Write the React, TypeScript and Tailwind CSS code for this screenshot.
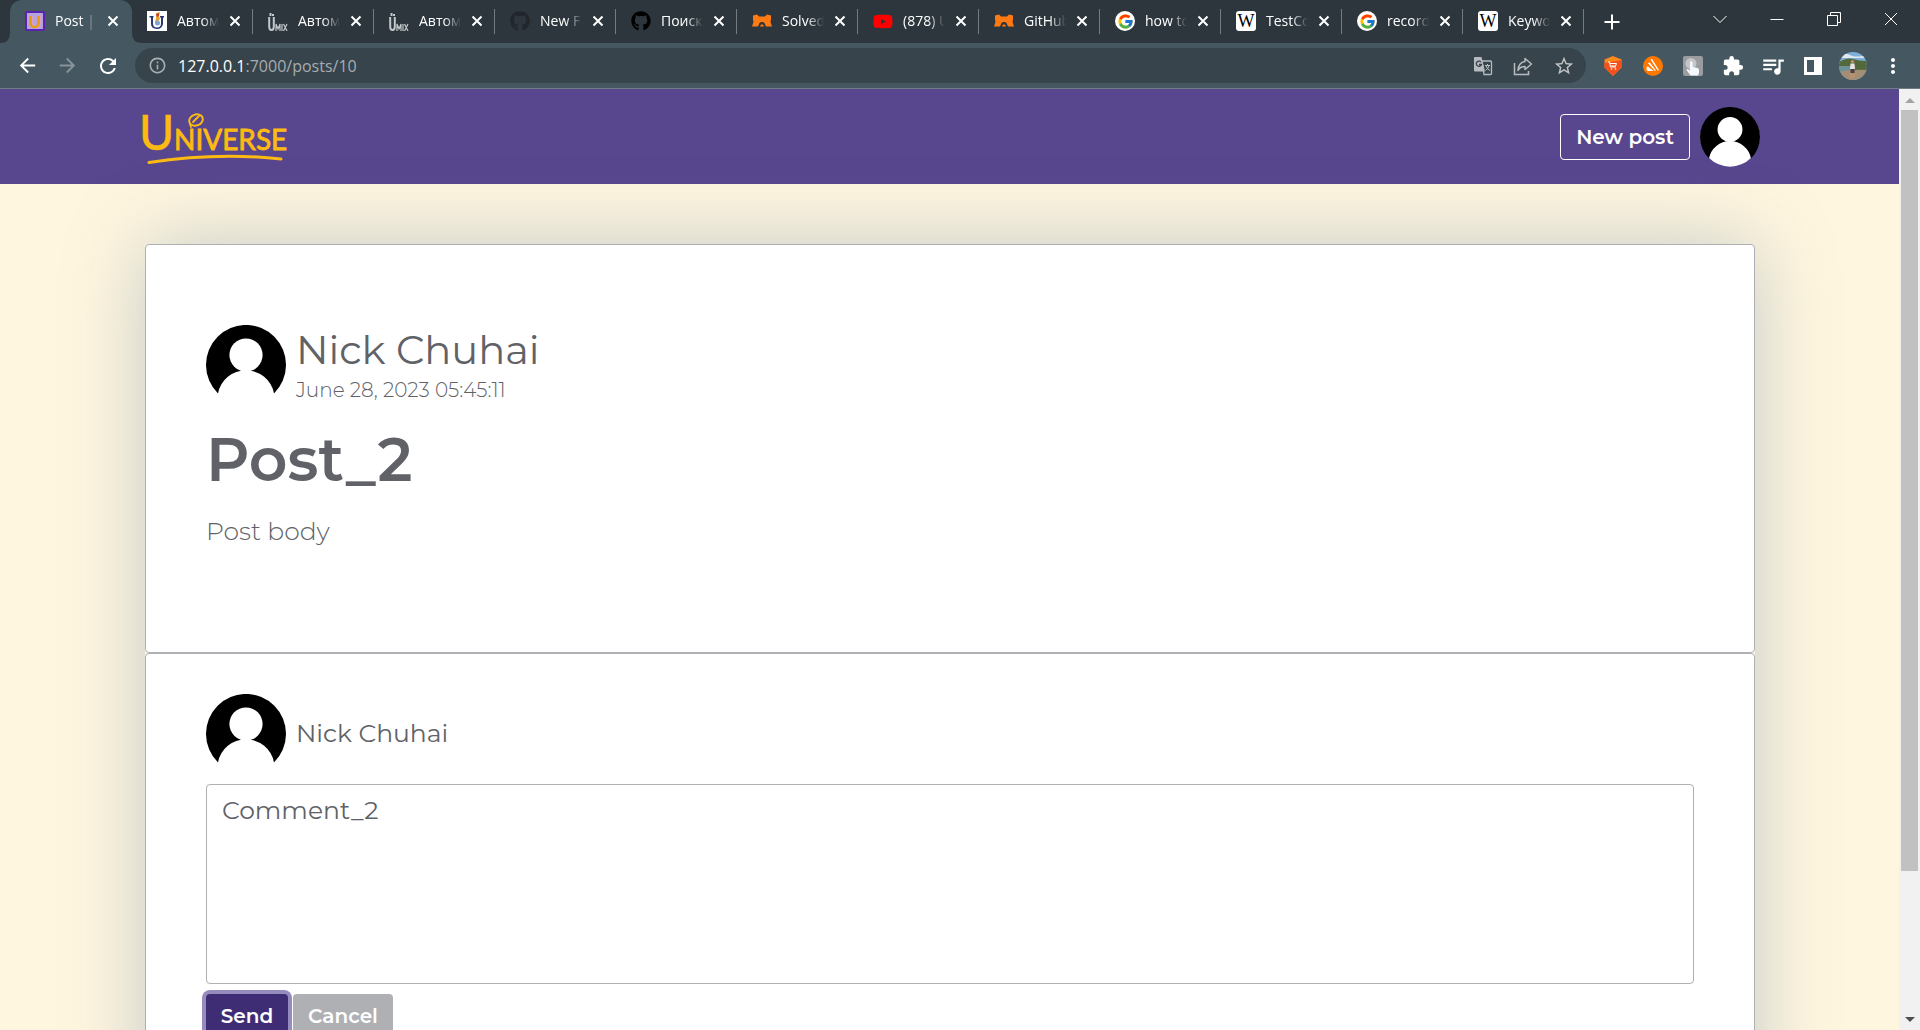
import type { ReactNode } from "react";
import { FaGithub, FaYoutube } from "react-icons/fa";
import { FcGoogle } from "react-icons/fc";
import {
  MdArrowBack,
  MdArrowForward,
  MdExtension,
  MdInfoOutline,
  MdMoreVert,
  MdQueueMusic,
  MdRefresh,
  MdStarBorder,
} from "react-icons/md";

function UniverseIcon() {
  return (
    <span className="flex size-5 items-center justify-center rounded-xs border-2 border-[#5b21b0] bg-[#b9a3dc] font-['Lato',sans-serif] text-[17px] leading-none font-bold text-[#ee9a0c]">
      U
    </span>
  );
}

function UniversityIcon() {
  return (
    <svg viewBox="0 0 20 20" className="size-5">
      <rect width="20" height="20" fill="#fff" />
      <path d="M2.500 5h4v1.500H6v6q0 4 4 4t4-4V6.500h-1V5h4v1.500h-1V13q-1 5-6 5-6-.5-6-5V6.500H2.500z" fill="#26386f" />
      <path d="M9 2l4-1-1 4 1 3-3 4-2-1 1-4z" fill="#e8a33a" />
      <path d="M9 3l3-1v3l-2 1z" fill="#c8442c" />
      <circle cx="10.500" cy="12" r="2.500" fill="#7fa6cf" />
    </svg>
  );
}

function UmixIcon() {
  return (
    <span className="flex size-5 items-end text-[#c3c8cb]">
      <svg viewBox="0 0 7 18" className="h-[18px] w-[7px] shrink-0" fill="none" stroke="currentColor" strokeWidth="2">
        <path d="M1.200 4v9.500q0 3.500 2.300 3.500t2.300-3.500V4M2.500 0v3M5 1v2" />
      </svg>
      <svg viewBox="0 0 13 8" className="h-2 w-[13px] shrink-0" fill="none" stroke="currentColor" strokeWidth="1.200">
        <path d="M1 8V1l2 5 2-5v7M7 1v7M8.500 1L12 8M12 1L8.500 8" />
      </svg>
    </span>
  );
}

function FoxIcon() {
  return (
    <svg viewBox="0 0 20 20" className="size-5" fill="#ff7a12">
      <path d="M1 4.500l4-1 2 2h6l2-2 4 1v4l-.5 2.500L20 15.500h-6l-1.500-3.500L11 11H9l-1.500 1L6 15.500H0L1.500 11 1 8.500z" />
      <path d="M8 15.500l1-2h2l1 2z" />
    </svg>
  );
}

function WikiIcon() {
  return (
    <span className="flex size-5 items-center justify-center rounded-[3px] bg-white font-['Liberation_Serif',serif] text-[18px] leading-none text-black">
      W
    </span>
  );
}

function GoogleIcon() {
  return (
    <span className="flex size-5 items-center justify-center rounded-full bg-white">
      <FcGoogle size={17} />
    </span>
  );
}

const tabs: { title: string; icon: ReactNode }[] = [
  { title: "Post | U", icon: <UniverseIcon /> },
  { title: "Автом", icon: <UniversityIcon /> },
  { title: "Автом", icon: <UmixIcon /> },
  { title: "Автом", icon: <UmixIcon /> },
  { title: "New F", icon: <FaGithub size={20} color="#20262b" /> },
  { title: "Поиск", icon: <FaGithub size={20} color="#000" /> },
  { title: "Solved", icon: <FoxIcon /> },
  { title: "(878) U", icon: <FaYoutube size={21} color="#f00" /> },
  { title: "GitHub", icon: <FoxIcon /> },
  { title: "how to", icon: <GoogleIcon /> },
  { title: "TestCo", icon: <WikiIcon /> },
  { title: "record", icon: <GoogleIcon /> },
  { title: "Keywo", icon: <WikiIcon /> },
];

function CloseGlyph() {
  return (
    <svg viewBox="0 0 12 12" className="size-3" stroke="currentColor" strokeWidth="2">
      <path d="M1.500 1.500l9 9M10.500 1.500l-9 9" />
    </svg>
  );
}

function TabFoot({ className }: { className: string }) {
  return (
    <svg viewBox="0 0 10 10" className={className} fill="#455760">
      <path d="M10 0v10H0Q10 10 10 0z" />
    </svg>
  );
}

function Tab({ title, icon, active }: { title: string; icon: ReactNode; active: boolean }) {
  return (
    <div
      className={
        active
          ? "relative flex h-full w-[122px] shrink-0 items-center rounded-t-xl bg-[#455760] pb-px pl-[15px]"
          : "relative flex h-full w-[121px] shrink-0 items-center pb-px pl-[15px]"
      }
    >
      {active && <TabFoot className="absolute bottom-0 -left-2.5 size-2.5" />}
      {active && <TabFoot className="absolute -right-2.5 bottom-0 size-2.5 -scale-x-100" />}
      <span className="flex size-5 shrink-0 items-center justify-center">{icon}</span>
      <span className="ml-2.5 w-[42px] overflow-hidden mask-r-from-60% text-[14px] leading-5 whitespace-nowrap text-white">
        {title}
      </span>
      <button type="button" aria-label="Close tab" className="ml-2.5 text-white">
        <CloseGlyph />
      </button>
      {!active && <span className="absolute right-0 h-[25px] w-px bg-[#737b80]" />}
    </div>
  );
}

function TabStrip() {
  return (
    <div className="flex h-[43px] items-center bg-[#2c363c] pl-2.5">
      {tabs.map((tab, i) => (
        <Tab key={i} title={tab.title} icon={tab.icon} active={i === 0} />
      ))}
      <button type="button" aria-label="New tab" className="ml-5 text-white">
        <svg viewBox="0 0 16 16" className="size-4" stroke="currentColor" strokeWidth="2">
          <path d="M8 .500v15M.500 8h15" />
        </svg>
      </button>
      <div className="mr-[22px] mb-1.5 ml-auto flex gap-[43px] text-white">
        <button type="button" aria-label="Search tabs">
          <svg viewBox="0 0 14 14" className="size-3.5" fill="none" stroke="currentColor">
            <path d="M.500 4L7 10.500 13.500 4" />
          </svg>
        </button>
        <button type="button" aria-label="Minimize">
          <svg viewBox="0 0 14 14" className="size-3.5" stroke="currentColor">
            <path d="M.500 7.500h13" />
          </svg>
        </button>
        <button type="button" aria-label="Restore">
          <svg viewBox="0 0 14 14" className="size-3.5" fill="none" stroke="currentColor">
            <path d="M.500 3.500h10v10H.500zM3.500 3V.500h10v10H11" />
          </svg>
        </button>
        <button type="button" aria-label="Close window">
          <svg viewBox="0 0 14 14" className="size-3.5" stroke="currentColor">
            <path d="M1 1l12 12M13 1L1 13" />
          </svg>
        </button>
      </div>
    </div>
  );
}

function TranslateIcon() {
  return (
    <svg viewBox="0 0 20 20" className="size-5">
      <path d="M9 5h8.500a1 1 0 011 1v11.500a1 1 0 01-1 1H11z" fill="none" stroke="#b6bbbf" strokeWidth="1.300" />
      <path d="M12 9.500h5M14.500 8v1.500M16 9.500q-.5 3-3.500 5M13 10q1 3 4 4.500" fill="none" stroke="#b6bbbf" />
      <path d="M2 1h6.500l3.500 14.500H2a1 1 0 01-1-1V2a1 1 0 011-1z" fill="#b6bbbf" />
      <path d="M8 6.200A2.600 2.600 0 108.400 8.500H6" fill="none" stroke="#38444b" strokeWidth="1.300" />
    </svg>
  );
}

function ShareIcon() {
  return (
    <svg viewBox="0 0 20 20" className="size-5" fill="none" stroke="#b6bbbf" strokeWidth="1.500">
      <path d="M1.500 7v11.500h14V15" />
      <path d="M12 2.500l6.500 5.500-6.500 5.500V10.500q-5 0-7 4 .5-8 7-9z" strokeLinejoin="round" />
    </svg>
  );
}

function Toolbar() {
  return (
    <div className="flex h-[46px] items-center border-b border-[#6f7c83] bg-[#455760] pl-4 text-white">
      <button type="button" aria-label="Back" className="flex w-10">
        <MdArrowBack size={23} />
      </button>
      <button type="button" aria-label="Forward" className="flex w-10 text-[#89949a]">
        <MdArrowForward size={23} />
      </button>
      <button type="button" aria-label="Reload" className="flex w-[39px]">
        <MdRefresh size={24} />
      </button>
      <div className="flex h-[35px] min-w-0 flex-1 items-center rounded-full bg-[#38444b] pr-[11px] pl-[13px]">
        <MdInfoOutline size={19} color="#a9b0b4" />
        <span className="ml-[11px] flex-1 text-[16px] leading-6 text-[#a5adb2]">
          <span className="text-white">127.0.0.1</span>:7000/posts/10
        </span>
        <div className="flex gap-5">
          <button type="button" aria-label="Translate">
            <TranslateIcon />
          </button>
          <button type="button" aria-label="Share">
            <ShareIcon />
          </button>
          <button type="button" aria-label="Bookmark" className="text-[#c0c4c7]">
            <MdStarBorder size={22} />
          </button>
        </div>
      </div>
      <div className="ml-[17px] flex items-center gap-5">
        <svg viewBox="0 0 20 20" className="size-5">
          <path d="M10 0l8.500 3.500v8L10 20l-8.500-8.500v-8z" fill="#ff8a1c" />
          <path d="M1.500 7L18.500 4v7.500L10 20l-8.500-8.500z" fill="#f4511e" />
          <path d="M5 6h1.500l1 5h5.500M7 7.500h6.500l-1 2.500H8" fill="none" stroke="#fff" />
          <circle cx="8.500" cy="13" r=".8" fill="#fff" />
          <circle cx="12.500" cy="13" r=".8" fill="#fff" />
        </svg>
        <svg viewBox="0 0 20 20" className="size-5">
          <circle cx="10" cy="10" r="10" fill="#ff7800" />
          <path
            d="M7.500 3.500q1.200-1 2 .3L16 14l-1.300.5zM5 7.200q.8-1.200 2-.4l6 7.700-1.300.2zM3.500 11.500q.6-1.400 1.800-.7l5.200 4.200H5q-2-1-1.500-3.500z"
            fill="#fff"
          />
        </svg>
        <svg viewBox="0 0 20 20" className="size-5">
          <rect width="20" height="20" rx="2" fill="#9a9c9e" />
          <circle cx="8" cy="7.500" r="5.500" fill="#c3c5c6" />
          <path
            d="M7 6.500a1.300 1.300 0 012.600 0V11l5 1q1.400.3 1.400 2v3l-1 2.500H7.500L3.500 14q.5-1.500 2-.5L7 14.500z"
            fill="#f3f9fe"
          />
        </svg>
        <MdExtension size={22} className="-mx-px" />
        <MdQueueMusic size={26} className="-mx-[3px]" />
        <svg viewBox="0 0 20 20" className="size-5">
          <path d="M1 1h18v18H1zM4 4v12h7V4z" fill="#fff" fillRule="evenodd" />
        </svg>
        <svg viewBox="0 0 28 28" className="-mx-1 size-7">
          <clipPath id="profile-clip">
            <circle cx="14" cy="14" r="14" />
          </clipPath>
          <g clipPath="url(#profile-clip)">
            <rect width="28" height="28" fill="#7fb0dc" />
            <path d="M0 3q6-3 11 0t17 0v3H0z" fill="#dfe8ee" />
            <path d="M0 10q8-5 14-3t14 2v10H0z" fill="#53693c" />
            <path d="M0 14h13v6H0z" fill="#6d9397" />
            <path d="M0 20q12-3 28-2v10H0z" fill="#a58f74" />
            <circle cx="13.500" cy="9.500" r="1.600" fill="#c98f6c" />
            <path d="M11.500 11.500h4l.5 5.500h-5z" fill="#e9e4e4" />
            <path d="M11.500 17h4v4h-4z" fill="#4e3d42" />
            <path d="M11.500 21H13v5h-1.500zM14 21h1.500v5H14z" fill="#c98f6c" />
          </g>
        </svg>
        <button type="button" aria-label="Menu" className="-ml-0.5 mr-[15px]">
          <MdMoreVert size={24} />
        </button>
      </div>
    </div>
  );
}

function Avatar({ className }: { className: string }) {
  return (
    <svg viewBox="0 0 80 80" className={className} role="img" aria-label="User avatar">
      <circle cx="40" cy="40" r="39.500" fill="#fff" />
      <path d="M12 68.500A40 40 0 1 1 68 68.500A28.500 28.500 0 0 0 12 68.500z" fill="#000" />
      <circle cx="40" cy="30" r="16.600" fill="#fff" />
    </svg>
  );
}

function Logo() {
  return (
    <a href="#home" aria-label="Universe">
      <svg viewBox="0 0 148 56" className="h-14 w-[148px]" fill="#fdbb12" stroke="#fdbb12">
        <text x="-3" y="41" fontFamily="Lato, sans-serif" fontSize="48" strokeWidth="0.600">
          U
        </text>
        <text x="32" y="41" fontFamily="Lato, sans-serif" fontSize="28" strokeWidth="0.800">
          NIVERSE
        </text>
        <g fill="none" strokeLinecap="round" strokeLinejoin="round">
          <ellipse cx="54" cy="11" rx="7" ry="5.500" transform="rotate(-20 54 11)" strokeWidth="2" />
          <path d="M51 13l6-6M48 15l1 3" strokeWidth="1.800" />
          <path d="M7 53.500Q75 43 139 50" strokeWidth="3" />
        </g>
      </svg>
    </a>
  );
}

function Scrollbar() {
  return (
    <div className="flex w-[21px] shrink-0 flex-col items-center justify-between bg-[#f1f1f1] pb-2 text-[#a3a3a3]">
      <div className="flex w-full flex-1 flex-col items-center">
        <svg viewBox="0 0 10 5" className="mt-[9px] mb-[7px] h-[5px] w-2.5" fill="currentColor">
          <path d="M5 0l5 5H0z" />
        </svg>
        <div className="h-[82%] w-[17px] bg-[#c1c1c1]" />
      </div>
      <svg viewBox="0 0 10 5" className="h-[5px] w-2.5" fill="#505050">
        <path d="M0 0h10L5 5z" />
      </svg>
    </div>
  );
}

export default function App() {
  return (
    <div className="flex h-screen flex-col overflow-hidden font-['Open_Sans','Noto_Sans',sans-serif]">
      <TabStrip />
      <Toolbar />
      <div className="flex min-h-0 flex-1">
        <div className="min-w-0 flex-1 overflow-hidden bg-[#fff6df] font-['Montserrat','Inter',sans-serif] text-[#606268]">
          <header className="flex h-[95px] items-center justify-between bg-[#58468e] pr-[139px] pl-[142px]">
            <Logo />
            <div className="flex items-center gap-2.5">
              <button
                type="button"
                className="h-[46px] w-[130px] rounded border border-white text-[20px] leading-6 font-semibold text-white"
              >
                New post
              </button>
              <Avatar className="size-[60px]" />
            </div>
          </header>
          <main className="pt-[60px] pr-36 pl-[145px]">
            <div className="rounded shadow-[0_0_80px_rgba(112,140,170,0.42)]">
              <article className="rounded border border-[#aeb0b4] bg-white px-[60px] pt-20 pb-[101px]">
                <div className="flex gap-2.5">
                  <Avatar className="size-20" />
                  <div>
                    <p className="text-[40px] leading-[50px] font-normal">Nick Chuhai</p>
                    <p className="text-[20px] leading-[30px] font-light">June 28, 2023 05:45:11</p>
                  </div>
                </div>
                <h1 className="mt-3 text-[60px] leading-[86px] font-semibold">Post_2</h1>
                <p className="mt-2 text-[25px] leading-10 font-light">Post body</p>
              </article>
              <section className="rounded border border-[#aeb0b4] bg-white px-[60px] pt-10 pb-24">
                <div className="flex items-center gap-2.5">
                  <Avatar className="size-20" />
                  <label htmlFor="comment" className="pb-0.5 text-[25px] leading-8 font-normal">
                    Nick Chuhai
                  </label>
                </div>
                <textarea
                  id="comment"
                  defaultValue="Comment_2"
                  className="mt-2.5 block h-[200px] w-full resize-none rounded border border-[#aeb0b4] px-[15px] py-1.5 text-[25px] leading-[38px] font-normal outline-none"
                />
                <div className="mt-2.5 flex gap-[5px] text-[20px] font-semibold text-white">
                  <button type="button" className="h-11 w-[82px] rounded bg-[#3e2c74] ring-4 ring-[#968bbd]">
                    Send
                  </button>
                  <button type="button" className="h-11 w-[100px] rounded bg-[#aeb0b4]">
                    Cancel
                  </button>
                </div>
              </section>
            </div>
          </main>
        </div>
        <Scrollbar />
      </div>
    </div>
  );
}
